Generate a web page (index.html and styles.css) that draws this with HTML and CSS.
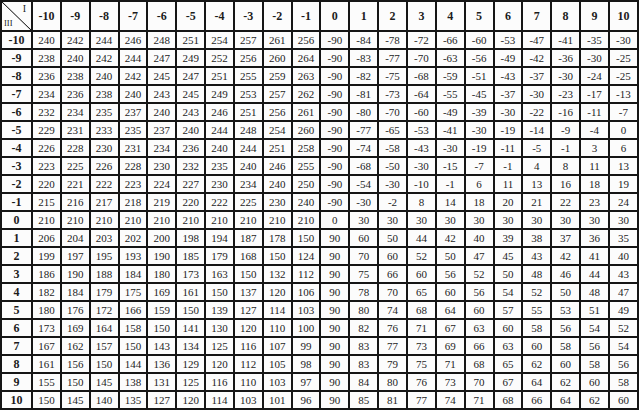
FILE: index.html
```html
<!DOCTYPE html>
<html lang="en">
<head>
<meta charset="utf-8">
<title>Table</title>
<link rel="stylesheet" href="styles.css">
</head>
<body>
<table class="grid">
<colgroup><col class="c-head"><col span="21"></colgroup>
<thead>
<tr class="hrow"><th class="corner"><div class="corner-box"><span class="lab-top">I</span><span class="lab-bot">III</span></div></th><th>-10</th><th>-9</th><th>-8</th><th>-7</th><th>-6</th><th>-5</th><th>-4</th><th>-3</th><th>-2</th><th>-1</th><th>0</th><th>1</th><th>2</th><th>3</th><th>4</th><th>5</th><th>6</th><th>7</th><th>8</th><th>9</th><th>10</th></tr>
</thead>
<tbody>
<tr><th>-10</th><td>240</td><td>242</td><td>244</td><td>246</td><td>248</td><td>251</td><td>254</td><td>257</td><td>261</td><td>256</td><td>-90</td><td>-84</td><td>-78</td><td>-72</td><td>-66</td><td>-60</td><td>-53</td><td>-47</td><td>-41</td><td>-35</td><td>-30</td></tr>
<tr><th>-9</th><td>238</td><td>240</td><td>242</td><td>244</td><td>247</td><td>249</td><td>252</td><td>256</td><td>260</td><td>264</td><td>-90</td><td>-83</td><td>-77</td><td>-70</td><td>-63</td><td>-56</td><td>-49</td><td>-42</td><td>-36</td><td>-30</td><td>-25</td></tr>
<tr><th>-8</th><td>236</td><td>238</td><td>240</td><td>242</td><td>245</td><td>247</td><td>251</td><td>255</td><td>259</td><td>263</td><td>-90</td><td>-82</td><td>-75</td><td>-68</td><td>-59</td><td>-51</td><td>-43</td><td>-37</td><td>-30</td><td>-24</td><td>-25</td></tr>
<tr><th>-7</th><td>234</td><td>236</td><td>238</td><td>240</td><td>243</td><td>245</td><td>249</td><td>253</td><td>257</td><td>262</td><td>-90</td><td>-81</td><td>-73</td><td>-64</td><td>-55</td><td>-45</td><td>-37</td><td>-30</td><td>-23</td><td>-17</td><td>-13</td></tr>
<tr><th>-6</th><td>232</td><td>234</td><td>235</td><td>237</td><td>240</td><td>243</td><td>246</td><td>251</td><td>256</td><td>261</td><td>-90</td><td>-80</td><td>-70</td><td>-60</td><td>-49</td><td>-39</td><td>-30</td><td>-22</td><td>-16</td><td>-11</td><td>-7</td></tr>
<tr><th>-5</th><td>229</td><td>231</td><td>233</td><td>235</td><td>237</td><td>240</td><td>244</td><td>248</td><td>254</td><td>260</td><td>-90</td><td>-77</td><td>-65</td><td>-53</td><td>-41</td><td>-30</td><td>-19</td><td>-14</td><td>-9</td><td>-4</td><td>0</td></tr>
<tr><th>-4</th><td>226</td><td>228</td><td>230</td><td>231</td><td>234</td><td>236</td><td>240</td><td>244</td><td>251</td><td>258</td><td>-90</td><td>-74</td><td>-58</td><td>-43</td><td>-30</td><td>-19</td><td>-11</td><td>-5</td><td>-1</td><td>3</td><td>6</td></tr>
<tr><th>-3</th><td>223</td><td>225</td><td>226</td><td>228</td><td>230</td><td>232</td><td>235</td><td>240</td><td>246</td><td>255</td><td>-90</td><td>-68</td><td>-50</td><td>-30</td><td>-15</td><td>-7</td><td>-1</td><td>4</td><td>8</td><td>11</td><td>13</td></tr>
<tr><th>-2</th><td>220</td><td>221</td><td>222</td><td>223</td><td>224</td><td>227</td><td>230</td><td>234</td><td>240</td><td>250</td><td>-90</td><td>-54</td><td>-30</td><td>-10</td><td>-1</td><td>6</td><td>11</td><td>13</td><td>16</td><td>18</td><td>19</td></tr>
<tr><th>-1</th><td>215</td><td>216</td><td>217</td><td>218</td><td>219</td><td>220</td><td>222</td><td>225</td><td>230</td><td>240</td><td>-90</td><td>-30</td><td>-2</td><td>8</td><td>14</td><td>18</td><td>20</td><td>21</td><td>22</td><td>23</td><td>24</td></tr>
<tr><th>0</th><td>210</td><td>210</td><td>210</td><td>210</td><td>210</td><td>210</td><td>210</td><td>210</td><td>210</td><td>210</td><td>0</td><td>30</td><td>30</td><td>30</td><td>30</td><td>30</td><td>30</td><td>30</td><td>30</td><td>30</td><td>30</td></tr>
<tr><th>1</th><td>206</td><td>204</td><td>203</td><td>202</td><td>200</td><td>198</td><td>194</td><td>187</td><td>178</td><td>150</td><td>90</td><td>60</td><td>50</td><td>44</td><td>42</td><td>40</td><td>39</td><td>38</td><td>37</td><td>36</td><td>35</td></tr>
<tr><th>2</th><td>199</td><td>197</td><td>195</td><td>193</td><td>190</td><td>185</td><td>179</td><td>168</td><td>150</td><td>124</td><td>90</td><td>70</td><td>60</td><td>52</td><td>50</td><td>47</td><td>45</td><td>43</td><td>42</td><td>41</td><td>40</td></tr>
<tr><th>3</th><td>186</td><td>190</td><td>188</td><td>184</td><td>180</td><td>173</td><td>163</td><td>150</td><td>132</td><td>112</td><td>90</td><td>75</td><td>66</td><td>60</td><td>56</td><td>52</td><td>50</td><td>48</td><td>46</td><td>44</td><td>43</td></tr>
<tr><th>4</th><td>182</td><td>184</td><td>179</td><td>175</td><td>169</td><td>161</td><td>150</td><td>137</td><td>120</td><td>106</td><td>90</td><td>78</td><td>70</td><td>65</td><td>60</td><td>56</td><td>54</td><td>52</td><td>50</td><td>48</td><td>47</td></tr>
<tr><th>5</th><td>180</td><td>176</td><td>172</td><td>166</td><td>159</td><td>150</td><td>139</td><td>127</td><td>114</td><td>103</td><td>90</td><td>80</td><td>74</td><td>68</td><td>64</td><td>60</td><td>57</td><td>55</td><td>53</td><td>51</td><td>49</td></tr>
<tr><th>6</th><td>173</td><td>169</td><td>164</td><td>158</td><td>150</td><td>141</td><td>130</td><td>120</td><td>110</td><td>100</td><td>90</td><td>82</td><td>76</td><td>71</td><td>67</td><td>63</td><td>60</td><td>58</td><td>56</td><td>54</td><td>52</td></tr>
<tr><th>7</th><td>167</td><td>162</td><td>157</td><td>150</td><td>143</td><td>134</td><td>125</td><td>116</td><td>107</td><td>99</td><td>90</td><td>83</td><td>77</td><td>73</td><td>69</td><td>66</td><td>63</td><td>60</td><td>58</td><td>56</td><td>54</td></tr>
<tr><th>8</th><td>161</td><td>156</td><td>150</td><td>144</td><td>136</td><td>129</td><td>120</td><td>112</td><td>105</td><td>98</td><td>90</td><td>83</td><td>79</td><td>75</td><td>71</td><td>68</td><td>65</td><td>62</td><td>60</td><td>58</td><td>56</td></tr>
<tr><th>9</th><td>155</td><td>150</td><td>145</td><td>138</td><td>131</td><td>125</td><td>116</td><td>110</td><td>103</td><td>97</td><td>90</td><td>84</td><td>80</td><td>76</td><td>73</td><td>70</td><td>67</td><td>64</td><td>62</td><td>60</td><td>58</td></tr>
<tr><th>10</th><td>150</td><td>145</td><td>140</td><td>135</td><td>127</td><td>120</td><td>114</td><td>103</td><td>101</td><td>96</td><td>90</td><td>85</td><td>81</td><td>77</td><td>74</td><td>71</td><td>68</td><td>66</td><td>64</td><td>62</td><td>60</td></tr>
</tbody>
</table>
</body>
</html>
```

FILE: styles.css
```css
html, body {
  margin: 0;
  padding: 0;
  background: #ffffff;
}

.grid {
  width: 639px;
  height: 410px;
  table-layout: fixed;
  border-collapse: separate;
  border-spacing: 2px;
  background: #151515;
  font-family: "Liberation Serif", "Times New Roman", serif;
  color: #1c1c1c;
}

.c-head {
  width: 29px;
}

.grid th,
.grid td {
  background: #fcfcfc;
  padding: 0;
  text-align: center;
  vertical-align: middle;
  line-height: 1;
  height: 16px;
  overflow: hidden;
  white-space: nowrap;
}

.grid td {
  font-size: 11px;
  font-weight: normal;
}

.grid th {
  font-size: 12px;
  font-weight: bold;
}

.hrow th {
  height: 28px;
}

.corner-box {
  height: 28px;
  display: flex;
  flex-direction: column;
  justify-content: space-between;
  font-weight: normal;
  font-size: 10px;
  background: linear-gradient(to top right, transparent calc(50% - 0.8px), #151515 50%, transparent calc(50% + 0.8px));
}

.lab-top {
  align-self: flex-end;
  padding: 2px 5px 0 0;
}

.lab-bot {
  align-self: flex-start;
  padding: 0 0 3px 2px;
  font-size: 8.5px;
}
```
